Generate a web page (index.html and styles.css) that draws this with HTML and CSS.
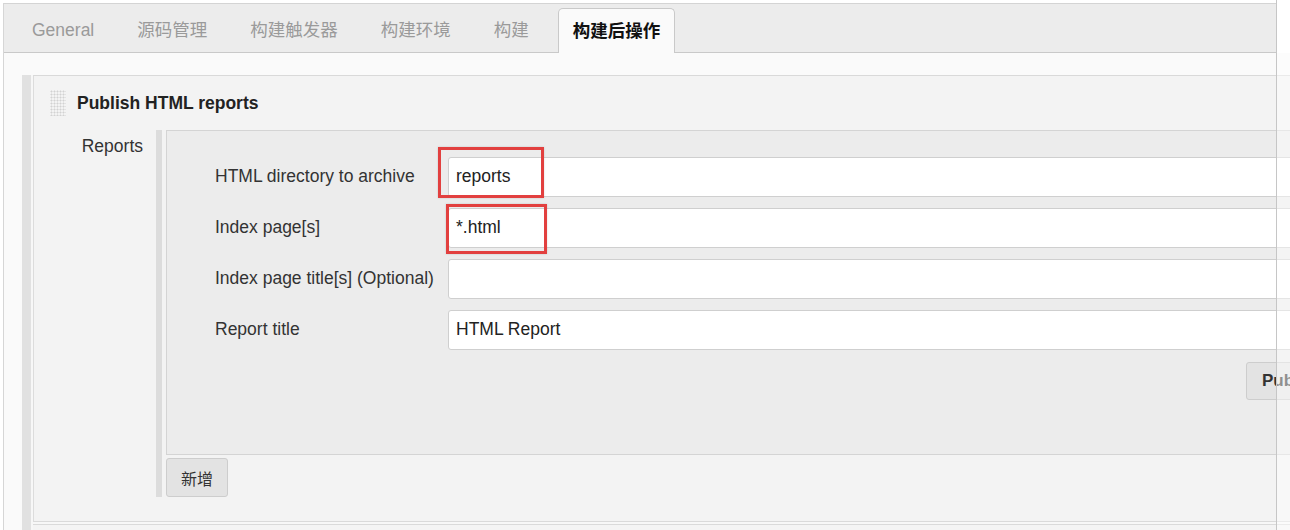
FILE: index.html
```html
<!DOCTYPE html>
<html>
<head>
<meta charset="utf-8">
<link rel="stylesheet" href="styles.css">
</head>
<body>
<div class="page">
  <div class="tabbar">
    <div class="tab">General</div>
    <div class="tab">源码管理</div>
    <div class="tab">构建触发器</div>
    <div class="tab">构建环境</div>
    <div class="tab">构建</div>
    <div class="tab active">构建后操作</div>
  </div>
  <div class="content">
    <div class="section">
      <div class="section-inner">
        <div class="section-header">
          <span class="handle"></span>
          <span class="section-title">Publish HTML reports</span>
        </div>
        <div class="reports-row">
          <div class="reports-label">Reports</div>
          <div class="repeat">
            <div class="repeat-box">
              <div class="form-row"><div class="form-label">HTML directory to archive</div><div class="input">reports</div></div>
              <div class="form-row"><div class="form-label">Index page[s]</div><div class="input">*.html</div></div>
              <div class="form-row"><div class="form-label">Index page title[s] (Optional)</div><div class="input"></div></div>
              <div class="form-row"><div class="form-label">Report title</div><div class="input">HTML Report</div></div>
              <div class="adv-row"><button class="btn btn-bold">Publishing options...</button></div>
            </div>
            <button class="btn btn-add">新增</button>
          </div>
        </div>
      </div>
      <div class="next-section"></div>
    </div>
  </div>
</div>
<div class="annot annot-1"></div>
<div class="annot annot-2"></div>
<div class="edge"></div>
</body>
</html>
```
FILE: styles.css
```css
html, body {
  margin: 0;
  padding: 0;
  width: 1290px;
  height: 530px;
  overflow: hidden;
  background: #ffffff;
}
body {
  position: relative;
  font-family: "Liberation Sans", Arial, "Noto Sans CJK SC", sans-serif;
  color: #333;
}
.page {
  margin: 3px 0 0 3px;
  width: 1500px;
  border-left: 1px solid #d6d6d6;
}
.tabbar {
  height: 48px;
  display: flex;
  align-items: flex-end;
  gap: 15px;
  padding-left: 14px;
  background: #ececec;
  border-top: 1px solid #d4d4d4;
  border-bottom: 1px solid #c9c9c9;
  box-sizing: content-box;
  width: 1258px;
}
.tab {
  height: 45px;
  line-height: 45px;
  padding: 0 14px;
  margin-bottom: -1px;
  font-size: 17.5px;
  color: #9a9a9a;
  white-space: nowrap;
}
.tab.active {
  height: 44px;
  line-height: 44px;
  background: #fafafa;
  border: 1px solid #c9c9c9;
  border-bottom: none;
  border-radius: 5px 5px 0 0;
  color: #111;
  font-weight: bold;
}
.content {
  background: #fafafa;
  padding: 22px 0 0 18px;
}
.section {
  border-left: 9px solid #e1e1e1;
  padding-left: 2px;
  background: #f7f7f7;
}
.section-inner {
  border-top: 1px solid #d9d9d9;
  border-left: 1px solid #dcdcdc;
  border-bottom: 1px solid #dadada;
  background: #f3f3f3;
  padding-bottom: 24px;
}
.section-header {
  display: flex;
  align-items: center;
  padding: 14px 0 14px 16px;
  height: 26px;
}
.handle {
  width: 16px;
  height: 26px;
  background-image: radial-gradient(circle, #d2d2d2 0.9px, transparent 1.1px);
  background-size: 3px 3px;
  margin-right: 11px;
}
.section-title {
  font-size: 17.5px;
  font-weight: bold;
  color: #222;
}
.reports-row {
  display: flex;
  align-items: flex-start;
}
.reports-label {
  width: 122px;
  box-sizing: border-box;
  text-align: right;
  padding: 6px 13px 0 0;
  line-height: 20px;
  font-size: 17.5px;
  color: #333;
}
.repeat {
  border-left: 6px solid #dcdcdc;
  padding-left: 4px;
}
.repeat-box {
  width: 1300px;
  background: #ececec;
  border: 1px solid #d4d4d4;
  padding: 26px 0 54px 0;
  display: flex;
  flex-direction: column;
  gap: 11px;
}
.form-row {
  display: flex;
  align-items: center;
  height: 40px;
}
.form-label {
  width: 281px;
  box-sizing: border-box;
  padding-left: 48px;
  padding-bottom: 2px;
  font-size: 17.5px;
  color: #333;
  white-space: nowrap;
}
.input {
  width: 1000px;
  height: 40px;
  box-sizing: border-box;
  background: #fff;
  border: 1px solid #cfcfcf;
  border-radius: 3px;
  padding: 0 7px 2px 7px;
  line-height: 36px;
  font-size: 17.5px;
  color: #222;
}
.adv-row {
  margin-top: 1px;
  padding-left: 1079px;
}
.btn {
  font-family: "Liberation Sans", Arial, "Noto Sans CJK SC", sans-serif;
  background: #e3e3e3;
  border: 1px solid #cdcdcd;
  border-radius: 3px;
  color: #333;
  cursor: pointer;
}
.btn-bold {
  height: 38px;
  padding: 0 15px;
  font-size: 17px;
  font-weight: bold;
  white-space: nowrap;
}
.btn-add {
  display: block;
  margin-top: 3px;
  height: 39px;
  width: 62px;
  padding: 0;
  font-size: 16px;
  font-family: "Noto Sans CJK SC", sans-serif;
}
.next-section {
  margin-top: 2px;
  border-top: 1px solid #dadada;
  height: 30px;
  background: #f4f4f4;
}
.annot {
  position: absolute;
  box-sizing: border-box;
  border: 3px solid #e2403f;
  box-shadow: 0 0 2px rgba(0,0,0,0.15);
}
.annot-1 {
  left: 438px;
  top: 147px;
  width: 106px;
  height: 51px;
}
.annot-2 {
  left: 446px;
  top: 204px;
  width: 101px;
  height: 50px;
}
.edge {
  position: absolute;
  left: 1276px;
  top: 0;
  width: 14px;
  height: 530px;
  border-left: 1px solid #c6c6c6;
  background: rgba(255,255,255,0.45);
}
```
